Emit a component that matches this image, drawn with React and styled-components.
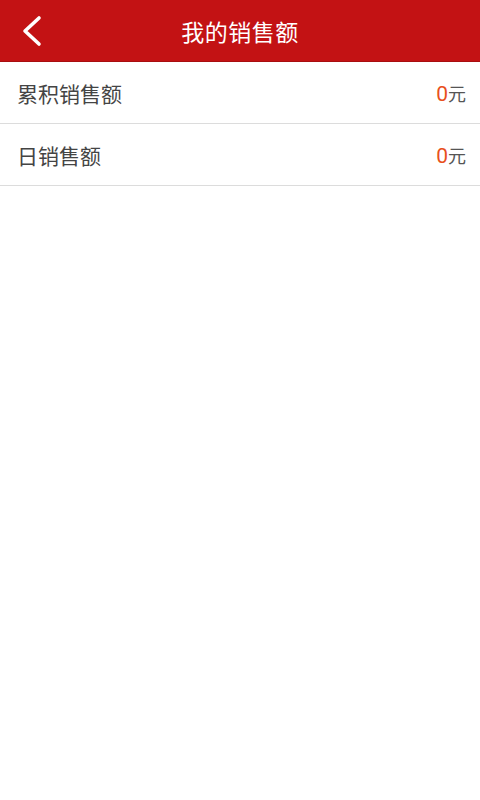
import React from 'react';
import styled, { createGlobalStyle } from 'styled-components';

const GlobalStyle = createGlobalStyle`
  html, body {
    margin: 0;
    padding: 0;
    background: #fff;
    font-family: "Noto Sans CJK SC", "Noto Sans", sans-serif;
  }
`;

const Page = styled.div`
  width: 480px;
  min-height: 800px;
  background: #fff;
`;

const Header = styled.header`
  height: 62px;
  background: #c31214;
  border-bottom: 1px solid #a80e10;
  box-sizing: border-box;
  display: grid;
  grid-template-columns: 62px 1fr 62px;
  align-items: center;
`;

const BackButton = styled.button`
  border: 0;
  background: none;
  padding: 0 0 0 20px;
  height: 100%;
  display: flex;
  align-items: center;
  cursor: pointer;
`;

const Title = styled.h1`
  margin: 0;
  text-align: center;
  color: #fff;
  font-size: 23px;
  font-weight: 400;
  letter-spacing: 0.5px;
`;

const List = styled.ul`
  list-style: none;
  margin: 0;
  padding: 0;
`;

const Row = styled.li`
  height: 61px;
  padding: 0 14px 0 17px;
  display: flex;
  align-items: center;
  justify-content: space-between;
  border-bottom: 1px solid #dcdcdc;
`;

const Label = styled.span`
  color: #444;
  font-size: 21px;
`;

const Amount = styled.span`
  display: flex;
  align-items: baseline;
`;

const Number = styled.span`
  color: #e8501c;
  font-size: 21px;
  font-family: "Roboto", "Noto Sans", sans-serif;
`;

const Unit = styled.span`
  color: #555;
  font-size: 18px;
`;

const rows = [
  { label: '累积销售额', value: 0 },
  { label: '日销售额', value: 0 },
];

export default function App() {
  return (
    <Page>
      <GlobalStyle />
      <Header>
        <BackButton aria-label="返回">
          <svg width="22" height="32" viewBox="0 0 22 32">
            <polyline points="19,3 5,16 19,29" fill="none" stroke="#fff" strokeWidth="3.6" strokeLinecap="round" strokeLinejoin="round" />
          </svg>
        </BackButton>
        <Title>我的销售额</Title>
        <div />
      </Header>
      <List>
        {rows.map((r) => (
          <Row key={r.label}>
            <Label>{r.label}</Label>
            <Amount>
              <Number>{r.value}</Number>
              <Unit>元</Unit>
            </Amount>
          </Row>
        ))}
      </List>
    </Page>
  );
}
